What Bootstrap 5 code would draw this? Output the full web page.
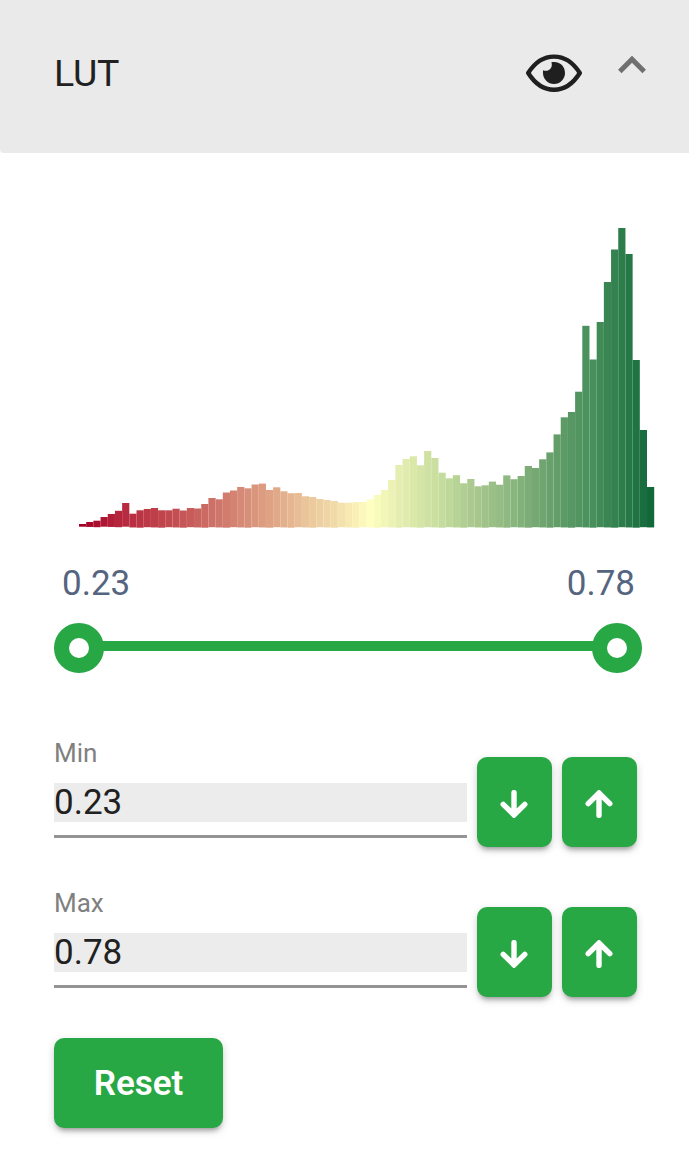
<!DOCTYPE html>
<html lang="en">
<head>
<meta charset="utf-8">
<meta name="viewport" content="width=device-width, initial-scale=1">
<title>LUT</title>
<link href="https://cdn.jsdelivr.net/npm/bootstrap@5.3.0/dist/css/bootstrap.min.css" rel="stylesheet">
<style>
  body { font-family: Roboto, "Liberation Sans", sans-serif; background: #fff; color: #212121; min-height: 100vh; }
  svg { display: block; }
  .panel-head { height: 153px; background: #eaeaea; padding: 0 43px 8px 54px; border-bottom-left-radius: 4px; }
  .panel-title { font-size: 37.5px; line-height: 44px; font-weight: 400; letter-spacing: -.2px; }
  .chevron { margin: 0 0 15px 36px; }
  .panel-main { padding: 67px 0 0 54px; }
  .range-labels { width: 588px; padding: 0 7px 0 8px; margin-top: 31px; font-size: 35px; line-height: 46px; color: #56657f; }
  .slider { width: 588px; height: 50px; margin-top: 16px; }
  .knob { width: 50px; height: 50px; border: 15px solid #28a745; border-radius: 50%; background: #fff; flex: none; }
  .rail { height: 10px; margin: -4px -2px 0; background: #28a745; }
  .limit { width: 583px; height: 110px; gap: 10px; }
  .limit label { font-size: 26px; line-height: 32px; color: #808080; }
  .limit input { height: 39px; margin-top: 14px; padding: 0; border: 0; border-radius: 0; background: #ececec !important; color: #212121; font-size: 35px; line-height: 39px; }
  .underline { height: 3px; margin-top: 13px; background: #949494; }
  .btn-green { background: #28a745; color: #fff; border: 0; border-radius: 10px; height: 90px; box-shadow: 0 5px 5px -3px rgba(0,0,0,.3), 0 3px 8px rgba(0,0,0,.18); }
  .btn-green:hover { background: #218838; color: #fff; }
  .btn-arrow { width: 75px; flex: none; padding: 4px 1px 0 0; }
  .btn-reset { width: 169px; margin-top: 41px; padding: 2px 0 0; font-size: 35px; font-weight: 600; }
</style>
</head>
<body>
<header class="panel-head d-flex align-items-center">
  <h1 class="panel-title mb-0 me-auto">LUT</h1>
  <svg width="56" height="38" viewBox="0 0 56 38" aria-label="Visible">
    <path d="M2.2 19C8.800 8.500 17.700 2.600 28 2.600S47.200 8.500 53.800 19C47.200 29.500 38.300 35.700 28 35.700S8.800 29.500 2.200 19Z" fill="none" stroke="#1f1f1f" stroke-width="4.400" stroke-linejoin="round"/>
    <path d="M25.400 8.200C34 6.600 39 12.300 39 19A11 11 0 0 1 17 19V16.200C21.600 18.300 27.500 14.500 25.400 8.200Z" fill="#1f1f1f"/>
  </svg>
  <svg class="chevron" width="28" height="18" viewBox="0 0 28 18" aria-label="Collapse">
    <path d="M1.800 15.400L14 3.200L26.200 15.400" fill="none" stroke="#707070" stroke-width="5"/>
  </svg>
</header>

<main class="panel-main">
  <svg id="histogram" width="610" height="310" viewBox="54 220 610 310" aria-label="Histogram"></svg>

  <div class="range-labels d-flex justify-content-between"><span>0.23</span><span>0.78</span></div>
  <div class="slider d-flex align-items-center">
    <div class="knob"></div><div class="rail flex-grow-1"></div><div class="knob"></div>
  </div>

  <div class="limit d-flex" style="margin-top:64px">
    <div class="flex-grow-1 d-flex flex-column">
      <label for="min">Min</label>
      <input id="min" class="form-control" value="0.23">
      <div class="underline"></div>
    </div>
    <button class="btn btn-green btn-arrow align-self-end d-flex align-items-center justify-content-center" aria-label="Decrease minimum"><svg width="28" height="28" viewBox="0 0 28 28"><path d="M14 2.600V24.500M3.200 14.300L14 25L24.800 14.300" fill="none" stroke="#fff" stroke-width="5.400" stroke-linecap="round"/></svg></button>
    <button class="btn btn-green btn-arrow align-self-end d-flex align-items-center justify-content-center" aria-label="Increase minimum"><svg width="28" height="28" viewBox="0 0 28 28"><path d="M14 25.400V3.500M3.200 13.700L14 3L24.800 13.700" fill="none" stroke="#fff" stroke-width="5.400" stroke-linecap="round"/></svg></button>
  </div>
  <div class="limit d-flex" style="margin-top:40px">
    <div class="flex-grow-1 d-flex flex-column">
      <label for="max">Max</label>
      <input id="max" class="form-control" value="0.78">
      <div class="underline"></div>
    </div>
    <button class="btn btn-green btn-arrow align-self-end d-flex align-items-center justify-content-center" aria-label="Decrease maximum"><svg width="28" height="28" viewBox="0 0 28 28"><path d="M14 2.600V24.500M3.200 14.300L14 25L24.800 14.300" fill="none" stroke="#fff" stroke-width="5.400" stroke-linecap="round"/></svg></button>
    <button class="btn btn-green btn-arrow align-self-end d-flex align-items-center justify-content-center" aria-label="Increase maximum"><svg width="28" height="28" viewBox="0 0 28 28"><path d="M14 25.400V3.500M3.200 13.700L14 3L24.800 13.700" fill="none" stroke="#fff" stroke-width="5.400" stroke-linecap="round"/></svg></button>
  </div>
  <button class="btn btn-green btn-reset">Reset</button>
</main>

<script src="https://cdn.jsdelivr.net/npm/bootstrap@5.3.0/dist/js/bootstrap.bundle.min.js"></script>
<script>
  // top edge of each histogram bin
  const tops = [524,522,520.7,517,514,510.8,503,513.7,510.3,509,508,510.3,510.3,508.7,510.5,508,508.5,504,498,499.3,
    492.5,490.5,487,488.3,484.5,483.6,490,487.3,491.3,493.2,493,496.3,497,499,500,501,502.7,502.7,502.2,502,
    499.3,495,490,480,465,459,456.3,465.3,451,458,472.7,478.3,475.2,483.3,479,486.3,485.3,481.6,484.7,475.4,
    479.2,476,466,468,459.3,452.4,434.4,417.3,412,391.7,325.8,359.5,322,282,249.5,228,254,360,430,487];
  // colour ramp: [bin, r, g, b]
  const ramp = [[0,165,0,38],[5,181,37,60],[12,194,73,79],[19,207,118,107],[26,223,162,132],[31,234,196,154],
    [35,240,219,168],[38,250,240,182],[40,254,255,190],[44,229,238,176],[50,196,220,157],[55,166,198,140],
    [59,143,185,129],[63,118,168,115],[67,92,154,102],[71,71,143,91],[75,45,125,75],[79,19,104,58]];
  function colour(i) {
    const k = Math.max(1, ramp.findIndex(s => s[0] >= i)), a = ramp[k - 1], b = ramp[k];
    const t = (i - a[0]) / (b[0] - a[0]);
    return 'rgb(' + [1, 2, 3].map(c => Math.round(a[c] + (b[c] - a[c]) * t)).join(',') + ')';
  }
  const svg = document.getElementById('histogram'), step = 7.19;
  tops.forEach((top, i) => {
    const bar = document.createElementNS('http://www.w3.org/2000/svg', 'rect');
    bar.setAttribute('x', 79 + i * step);
    bar.setAttribute('y', top);
    bar.setAttribute('width', step);
    bar.setAttribute('height', (i < 7 ? 526.7 : 527.2) + (i % 3) * .25 - top);
    bar.setAttribute('fill', colour(i));
    svg.appendChild(bar);
  });
</script>
</body>
</html>
